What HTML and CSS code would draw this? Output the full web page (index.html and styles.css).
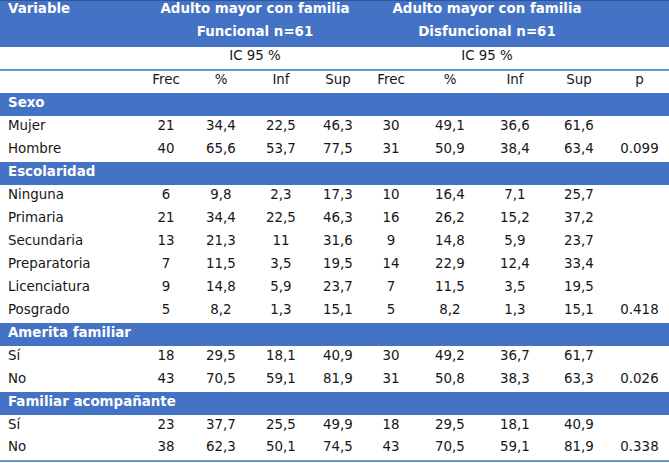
FILE: index.html
```html
<!DOCTYPE html>
<html lang="es">
<head>
<meta charset="utf-8">
<title>Tabla</title>
<link rel="stylesheet" href="styles.css">
</head>
<body>
<table class="data">
  <colgroup>
    <col class="c-var"><col class="c1"><col class="c2"><col class="c3"><col class="c4">
    <col class="c5"><col class="c6"><col class="c7"><col class="c8"><col class="c9">
  </colgroup>
  <thead>
    <tr class="hd hd1">
      <th class="lbl">Variable</th>
      <th colspan="4" class="g1">Adulto mayor con familia</th>
      <th colspan="4" class="g2">Adulto mayor con familia</th>
      <th></th>
    </tr>
    <tr class="hd hd2">
      <th></th>
      <th colspan="4" class="g1">Funcional n=61</th>
      <th colspan="4" class="g2">Disfuncional n=61</th>
      <th></th>
    </tr>
    <tr class="ic">
      <td></td>
      <td colspan="4" class="g1">IC 95 %</td>
      <td colspan="4" class="g2">IC 95 %</td>
      <td></td>
    </tr>
    <tr class="cols">
      <td></td>
      <td>Frec</td><td>%</td><td>Inf</td><td>Sup</td>
      <td>Frec</td><td>%</td><td>Inf</td><td>Sup</td>
      <td>p</td>
    </tr>
  </thead>
  <tbody>
    <tr class="sec"><td colspan="10">Sexo</td></tr>
    <tr><td class="lbl">Mujer</td><td>21</td><td>34,4</td><td>22,5</td><td>46,3</td><td>30</td><td>49,1</td><td>36,6</td><td>61,6</td><td></td></tr>
    <tr><td class="lbl">Hombre</td><td>40</td><td>65,6</td><td>53,7</td><td>77,5</td><td>31</td><td>50,9</td><td>38,4</td><td>63,4</td><td>0.099</td></tr>
    <tr class="sec"><td colspan="10">Escolaridad</td></tr>
    <tr><td class="lbl">Ninguna</td><td>6</td><td>9,8</td><td>2,3</td><td>17,3</td><td>10</td><td>16,4</td><td>7,1</td><td>25,7</td><td></td></tr>
    <tr><td class="lbl">Primaria</td><td>21</td><td>34,4</td><td>22,5</td><td>46,3</td><td>16</td><td>26,2</td><td>15,2</td><td>37,2</td><td></td></tr>
    <tr><td class="lbl">Secundaria</td><td>13</td><td>21,3</td><td>11</td><td>31,6</td><td>9</td><td>14,8</td><td>5,9</td><td>23,7</td><td></td></tr>
    <tr><td class="lbl">Preparatoria</td><td>7</td><td>11,5</td><td>3,5</td><td>19,5</td><td>14</td><td>22,9</td><td>12,4</td><td>33,4</td><td></td></tr>
    <tr><td class="lbl">Licenciatura</td><td>9</td><td>14,8</td><td>5,9</td><td>23,7</td><td>7</td><td>11,5</td><td>3,5</td><td>19,5</td><td></td></tr>
    <tr><td class="lbl">Posgrado</td><td>5</td><td>8,2</td><td>1,3</td><td>15,1</td><td>5</td><td>8,2</td><td>1,3</td><td>15,1</td><td>0.418</td></tr>
    <tr class="sec"><td colspan="10">Amerita familiar</td></tr>
    <tr><td class="lbl">Sí</td><td>18</td><td>29,5</td><td>18,1</td><td>40,9</td><td>30</td><td>49,2</td><td>36,7</td><td>61,7</td><td></td></tr>
    <tr><td class="lbl">No</td><td>43</td><td>70,5</td><td>59,1</td><td>81,9</td><td>31</td><td>50,8</td><td>38,3</td><td>63,3</td><td>0.026</td></tr>
    <tr class="sec"><td colspan="10">Familiar acompañante</td></tr>
    <tr><td class="lbl">Sí</td><td>23</td><td>37,7</td><td>25,5</td><td>49,9</td><td>18</td><td>29,5</td><td>18,1</td><td>40,9</td><td></td></tr>
    <tr class="last"><td class="lbl">No</td><td>38</td><td>62,3</td><td>50,1</td><td>74,5</td><td>43</td><td>70,5</td><td>59,1</td><td>81,9</td><td>0.338</td></tr>
  </tbody>
</table>
</body>
</html>
```

FILE: styles.css
```css
html, body {
  margin: 0;
  padding: 0;
  background: #ffffff;
}

.data {
  border-collapse: collapse;
  table-layout: fixed;
  width: 669px;
  font-family: "DejaVu Sans", Verdana, sans-serif;
  font-size: 13.4px;
  color: #161616;
  border-top: 1px solid #2f5597;
}

.c-var { width: 140px; }
.c1 { width: 52px; }
.c2 { width: 58px; }
.c3 { width: 62px; }
.c4 { width: 52px; }
.c5 { width: 54px; }
.c6 { width: 64px; }
.c7 { width: 66px; }
.c8 { width: 62px; }
.c9 { width: 59px; }

.data th,
.data td {
  padding: 0 0 3px 0;
  text-align: center;
  vertical-align: middle;
  line-height: 16px;
  white-space: nowrap;
  font-weight: normal;
}

.data tr {
  height: 23px;
}

.data .lbl {
  text-align: left;
  padding-left: 8px;
}

.hd th {
  background: #4472c4;
  color: #ffffff;
  font-weight: bold;
}

.hd1 {
  height: 22px;
}

.hd1 th {
  padding-bottom: 6px;
}

.hd2 th {
  padding-bottom: 6px;
}

.data .g1 {
  padding-left: 6px;
}

.ic td {
  border-bottom: 2px solid #5b9bd5;
  padding-bottom: 4px;
}

.sec td {
  background: #4472c4;
  color: #ffffff;
  font-weight: bold;
  text-align: left;
  padding-left: 8px;
}

.last td {
  border-bottom: 2px solid #5b9bd5;
}
```
